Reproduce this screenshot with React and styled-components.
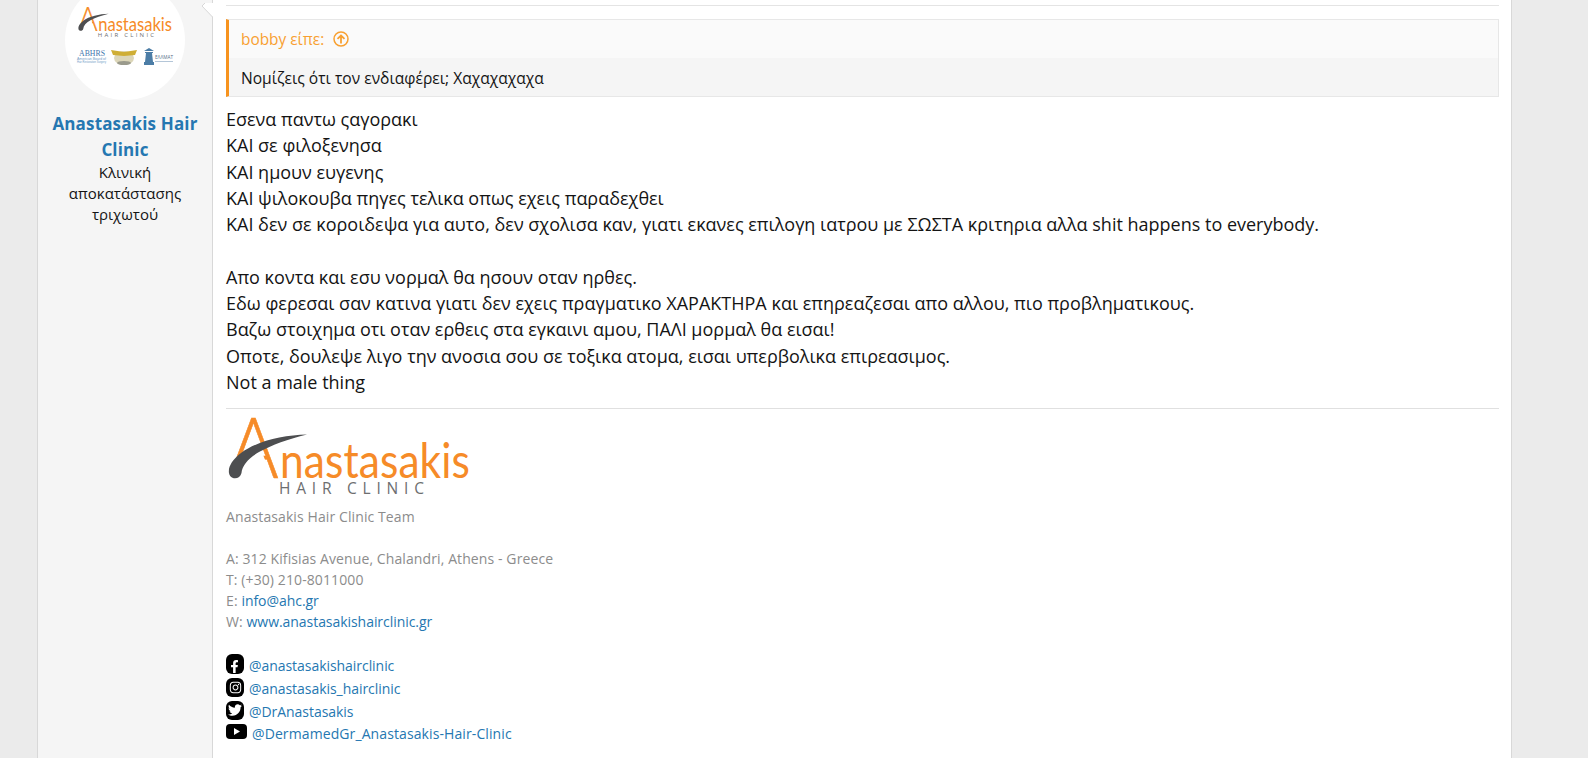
import React from "react";
import styled, { createGlobalStyle } from "styled-components";
import { FaFacebookF, FaInstagram, FaTwitter } from "react-icons/fa";

const Global = createGlobalStyle`
  html, body { margin: 0; padding: 0; height: 758px; overflow: hidden; background: #ebebeb; }
  body { font-family: "Open Sans", "Noto Sans", sans-serif; color: #141414; }
  * { box-sizing: border-box; }
`;
const Page = styled.div`
  display: flex; width: 1475px; height: 758px; margin-left: 37px; background: #fff;
  border-left: 1px solid #d8d8d8; border-right: 1px solid #d8d8d8; overflow: hidden;
`;
const Aside = styled.aside`
  position: relative; flex: 0 0 175px; background: #f5f5f5; border-right: 1px solid #d8d8d8;
  display: flex; flex-direction: column; align-items: center; text-align: center;
`;
const Arrow = styled.span`
  position: absolute; right: -1px; top: 0; width: 11px; height: 14px;
`;
const Avatar = styled.div`
  width: 120px; height: 120px; margin-top: -20px; margin-bottom: 11px; border-radius: 50%; background: #fff;
  flex: none; display: flex; flex-direction: column; align-items: center; gap: 10px; padding-top: 27px;
`;
const Name = styled.a`
  display: block; width: 160px; font-size: 17px; font-weight: 700; line-height: 26px; color: #2577b1; letter-spacing: 0.15px;
`;
const Role = styled.div`
  width: 150px; margin-top: -1px; font-size: 15px; line-height: 21px; color: #141414;
`;
const Main = styled.main`
  flex: 1; padding: 5px 12px 0 13px; min-width: 0;
`;
const Rule = styled.div`
  height: 1px; background: #e4e4e4;
`;
const Quote = styled.blockquote`
  margin: 13px 0 0; height: 78px; background: #f5f5f5; border: 1px solid #e7e7e7; border-left: 3px solid #f7931e;
`;
const QuoteHead = styled.div`
  height: 38px; background: #fafafa; padding-left: 12px; display: flex; align-items: center; gap: 9px;
  font-size: 15.4px; color: #f8a031;
`;
const QuoteBody = styled.div`
  height: 38px; padding: 2px 0 0 12px; display: flex; align-items: center; font-size: 15.6px; color: #141414;
`;
const Post = styled.div`
  margin-top: 9px; font-size: 18px; line-height: 26.3px; color: #141414;
`;
const Line = styled.div`
  min-height: 26.3px;
`;
const Signature = styled.div`
  margin-top: 13px; border-top: 1px solid #e0e0e0; padding-top: 8px; font-size: 14px; line-height: 21px; color: #8c8c8c; letter-spacing: 0.1px;
`;
const LogoWrap = styled.div`
  height: 80px; margin: 0 0 9px 2px;
`;
const Gap = styled.div`
  height: ${p => p.$h || 21}px;
`;
const Link = styled.a`
  color: #2577b1; letter-spacing: ${p => p.$ls ?? -0.05}px;
`;
const Socials = styled.div`
  display: flex; flex-direction: column; align-items: flex-start;
`;
const Social = styled.div`
  display: flex; align-items: center; gap: 5px; height: ${p => p.$h || 23}px;
`;
const Blob = styled.span`
  flex: none; width: 18px; height: ${p => p.$h || 19}px; margin-top: -3px; border-radius: 6px; background: #000; color: #fff;
  display: flex; align-items: ${p => p.$end ? "flex-end" : "center"}; justify-content: ${p => p.$end ? "flex-end" : "center"};
  padding: ${p => p.$end ? "0 3px 1px 0" : "0"};
`;
const LogoSvg = styled.svg`
  display: block; overflow: visible; flex: none;
`;

const Logo = ({ width = 242 }) => (
  <LogoSvg width={width} height={width * 80 / 242} viewBox="0 0 242 80">
    <text x="0" y="61" fontFamily="Lato, sans-serif" fontSize="85" fontWeight="300" fill="#f68b28" stroke="#f68b28" strokeWidth="0.6" textLength="51" lengthAdjust="spacingAndGlyphs">A</text>
    <path d="M25 11L45 64H-3V44L15 42z" fill="#fff" />
    <path d="M79 17.500C55 18 29 24 13 36 4 43 0 50 1 56c1 7 11 7 12.500 0C14 48 21 41 31 35 44 28 60 22 79 17.500z" fill="#4d4e50" />
    <text x="52" y="61" fontFamily="Lato, sans-serif" fontSize="48" fontWeight="400" fill="#f68b28" textLength="190" lengthAdjust="spacingAndGlyphs">nastasakis</text>
    <text x="51" y="77" fontFamily="'Open Sans', sans-serif" fontSize="15.500" fontWeight="500" fill="#6d6e70" textLength="145">HAIR CLINIC</text>
  </LogoSvg>
);

const Badges = () => (
  <LogoSvg width="96" height="18" viewBox="0 0 96 18">
    <text x="2" y="8" fontFamily="'Liberation Serif', serif" fontSize="8" fill="#3f76ad" textLength="26" lengthAdjust="spacingAndGlyphs">ABHRS</text>
    <text x="0" y="12" fontFamily="'Liberation Sans', sans-serif" fontSize="3" fill="#6f9cc6" textLength="29" lengthAdjust="spacingAndGlyphs">American Board of</text>
    <text x="0" y="15" fontFamily="'Liberation Sans', sans-serif" fontSize="3" fill="#6f9cc6" textLength="29" lengthAdjust="spacingAndGlyphs">Hair Restoration Surgery</text>
    <ellipse cx="47" cy="10" rx="10" ry="7" fill="#dcd6b8" />
    <path d="M34 2l13 2 13-2-2 5-11 1-11-1z" fill="#cfae35" />
    <ellipse cx="47" cy="15" rx="7" ry="2" fill="#9a9a8c" />
    <path d="M67 3l5-3 5 3zM68 4h8v1h-1l1 9h1v3H67v-3h1l1-9h-1z" fill="#4c7da6" />
    <text x="78" y="11" fontFamily="'Open Sans', sans-serif" fontSize="5" fill="#55708a" textLength="18" lengthAdjust="spacingAndGlyphs">ΕΛΛΜΑΤ</text>
    <rect x="78" y="13" width="18" height="1" fill="#b4c6d8" />
  </LogoSvg>
);

const lines1 = [
  "Εσενα παντω ςαγορακι",
  "ΚΑΙ σε φιλοξενησα",
  "ΚΑΙ ημουν ευγενης",
  "ΚΑΙ ψιλοκουβα πηγες τελικα οπως εχεις παραδεχθει",
  "ΚΑΙ δεν σε κοροιδεψα για αυτο, δεν σχολισα καν, γιατι εκανες επιλογη ιατρου με ΣΩΣΤΑ κριτηρια αλλα shit happens to everybody.",
  "",
  "Απο κοντα και εσυ νορμαλ θα ησουν οταν ηρθες.",
  "Εδω φερεσαι σαν κατινα γιατι δεν εχεις πραγματικο ΧΑΡΑΚΤΗΡΑ και επηρεαζεσαι απο αλλου, πιο προβληματικους.",
  "Βαζω στοιχημα οτι οταν ερθεις στα εγκαινι αμου, ΠΑΛΙ μορμαλ θα εισαι!",
  "Οποτε, δουλεψε λιγο την ανοσια σου σε τοξικα ατομα, εισαι υπερβολικα επιρεασιμος.",
  "Not a male thing",
];

export default function App() {
  return (
    <>
      <Global />
      <Page>
        <Aside>
          <Arrow>
            <svg width="11" height="14" viewBox="0 0 11 14"><path d="M11 14L0 3 3 0h8z" fill="#fff" /><path d="M10.500 14L0 3 3 0" fill="none" stroke="#d8d8d8" /></svg>
          </Arrow>
          <Avatar><Logo width={94} /><Badges /></Avatar>
          <Name>Anastasakis Hair Clinic</Name>
          <Role>Κλινική αποκατάστασης τριχωτού</Role>
        </Aside>
        <Main>
          <Rule />
          <Quote>
            <QuoteHead>
              bobby είπε:
              <svg width="16" height="16" viewBox="0 0 16 16" fill="none" stroke="#f8a031" strokeWidth="1.5"><circle cx="8" cy="8" r="7" /><path d="M8 12.500V4.500M4.500 7.800L8 4.500l3.500 3.300" strokeWidth="1.800" /></svg>
            </QuoteHead>
            <QuoteBody>Νομίζεις ότι τον ενδιαφέρει; Χαχαχαχαχα</QuoteBody>
          </Quote>
          <Post>
            {lines1.map((l, i) => <Line key={i}>{l}</Line>)}
          </Post>
          <Signature>
            <LogoWrap><Logo /></LogoWrap>
            <div>Anastasakis Hair Clinic Team</div>
            <Gap />
            <div>A: 312 Kifisias Avenue, Chalandri, Athens - Greece</div>
            <div>T: (+30) 210-8011000</div>
            <div>E: <Link>info@ahc.gr</Link></div>
            <div>W: <Link>www.anastasakishairclinic.gr</Link></div>
            <Gap $h={22} />
            <Socials>
              <Social><Blob $h={20} $end><FaFacebookF size={13} /></Blob><Link>@anastasakishairclinic</Link></Social>
              <Social><Blob><FaInstagram size={13} /></Blob><Link>@anastasakis_hairclinic</Link></Social>
              <Social><Blob><FaTwitter size={14} /></Blob><Link>@DrAnastasakis</Link></Social>
              <Social $h={21}>
                <svg width="21" height="15" viewBox="0 0 21 15" style={{ marginTop: -4 }}><rect width="21" height="15" rx="4" fill="#000" /><path d="M8 4l6 3.500L8 11z" fill="#fff" /></svg>
                <Link $ls={0.1}>@DermamedGr_Anastasakis-Hair-Clinic</Link>
              </Social>
            </Socials>
          </Signature>
        </Main>
      </Page>
    </>
  );
}
